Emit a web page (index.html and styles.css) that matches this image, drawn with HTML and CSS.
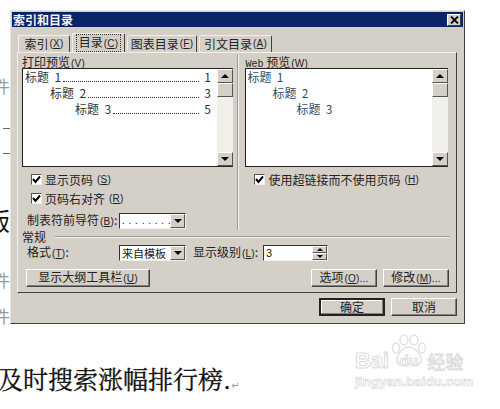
FILE: index.html
```html
<!DOCTYPE html>
<html lang="zh-CN">
<head>
  <meta charset="UTF-8">
  <title>索引和目录</title>
  <link rel="stylesheet" href="styles.css">
</head>
<body>
  <!-- word document peeking out behind the dialog -->
  <span class="doc-bit bit-1">件</span>
  <span class="doc-bit bit-2"></span>
  <span class="doc-bit bit-3"></span>
  <span class="doc-bit bit-4">版</span>
  <span class="doc-bit bit-5">件</span>
  <span class="doc-bit bit-6">件</span>

  <div class="dialog">
    <div class="titlebar">
      <span>索引和目录</span>
      <span class="close">
        <svg width="9" height="8" viewBox="0 0 9 8"><path d="M1 0.5 L8 7.5 M8 0.5 L1 7.5" stroke="#000" stroke-width="1.8" fill="none"/></svg>
      </span>
    </div>

    <div class="tabs">
      <div class="tab tab-index">索引<span class="mn">(<u>X</u>)</span></div>
      <div class="tab tab-toc active"><span class="focus">目录<span class="mn">(<u>C</u>)</span></span></div>
      <div class="tab tab-fig">图表目录<span class="mn">(<u>F</u>)</span></div>
      <div class="tab tab-cite">引文目录<span class="mn">(<u>A</u>)</span></div>
    </div>

    <div class="panel">
      <div class="columns">
        <div class="col col-print">
          <div class="label">打印预览<span class="mn">(<u>V</u>)</span></div>
          <div class="listbox">
            <div class="list-body">
              <div class="toc-row lvl-1"><span>标题&nbsp; 1</span><i class="dots"></i><span>1</span></div>
              <div class="toc-row lvl-2"><span>标题&nbsp; 2</span><i class="dots"></i><span>3</span></div>
              <div class="toc-row lvl-3"><span>标题&nbsp; 3</span><i class="dots"></i><span>5</span></div>
            </div>
            <div class="scrollbar">
              <div class="sb-btn"><b class="arrow up"></b></div>
              <div class="sb-thumb"></div>
              <div class="sb-track"></div>
              <div class="sb-btn"><b class="arrow down"></b></div>
            </div>
          </div>
          <div class="check first"><span class="box"><svg width="9" height="9" viewBox="0 0 9 9"><path d="M1 4 L3.5 7 L8 1.5" stroke="#000" stroke-width="2" fill="none"/></svg></span>显示页码<span class="mn">(<u>S</u>)</span></div>
          <div class="check"><span class="box"><svg width="9" height="9" viewBox="0 0 9 9"><path d="M1 4 L3.5 7 L8 1.5" stroke="#000" stroke-width="2" fill="none"/></svg></span>页码右对齐<span class="mn">(<u>R</u>)</span></div>
          <div class="field leader">
            <span class="field-label">制表符前导符<span class="mn">(<u>B</u>)</span>:</span>
            <div class="select"><span class="select-value dotted">. . . . . . . .</span><span class="select-btn"><b class="arrow down"></b></span></div>
          </div>
        </div>

        <div class="col col-web">
          <div class="label"><span class="web-word">Web</span> 预览<span class="mn">(<u>W</u>)</span></div>
          <div class="listbox">
            <div class="list-body web">
              <div class="toc-row lvl-1"><span>标题&nbsp; 1</span></div>
              <div class="toc-row web-2"><span>标题&nbsp; 2</span></div>
              <div class="toc-row web-3"><span>标题&nbsp; 3</span></div>
            </div>
            <div class="scrollbar">
              <div class="sb-btn"><b class="arrow up"></b></div>
              <div class="sb-thumb"></div>
              <div class="sb-track"></div>
              <div class="sb-btn"><b class="arrow down"></b></div>
            </div>
          </div>
          <div class="check first"><span class="box"><svg width="9" height="9" viewBox="0 0 9 9"><path d="M1 4 L3.5 7 L8 1.5" stroke="#000" stroke-width="2" fill="none"/></svg></span>使用超链接而不使用页码<span class="mn">(<u>H</u>)</span></div>
        </div>
      </div>

      <div class="group-head"><span>常规</span><i></i></div>
      <div class="format-row">
        <div class="field">
          <span class="field-label">格式<span class="mn">(<u>T</u>)</span>:</span>
          <div class="select"><span class="select-value">来自模板</span><span class="select-btn"><b class="arrow down"></b></span></div>
        </div>
        <span class="level-label">显示级别<span class="mn">(<u>L</u>)</span>:</span>
        <div class="spin">
          <span class="spin-value">3</span>
          <span class="spin-btns"><span><b class="arrow up"></b></span><span><b class="arrow down"></b></span></span>
        </div>
      </div>
      <div class="button-row">
        <button class="btn outline">显示大纲工具栏<span class="mn">(<u>U</u>)</span></button>
        <div class="button-right">
          <button class="btn">选项<span class="mn">(<u>O</u>)...</span></button>
          <button class="btn">修改<span class="mn">(<u>M</u>)...</span></button>
        </div>
      </div>
    </div>

    <div class="footer">
      <button class="btn default">确定</button>
      <button class="btn">取消</button>
    </div>
  </div>

  <p class="doc-line">及时搜索涨幅排行榜.<span class="para-mark">↵</span></p>

  <div class="watermark">
    <svg class="paw" width="38" height="34" viewBox="0 0 38 34">
      <g fill="#fff" stroke="#e2e2e2" stroke-width="1.5">
        <ellipse cx="6" cy="14" rx="3.5" ry="5"/>
        <ellipse cx="14" cy="6" rx="4" ry="5"/>
        <ellipse cx="24" cy="6" rx="4" ry="5"/>
        <ellipse cx="32" cy="14" rx="3.5" ry="5"/>
        <path d="M19 13 C25 13 32 21 31 27 C30 32 24 31 19 30 C14 31 8 32 7 27 C6 21 13 13 19 13 Z"/>
      </g>
    </svg>
    <div class="wm-main"><span>Bai</span><span class="wm-du">du</span><span class="wm-cn">经验</span></div>
    <div class="wm-url">jingyan.baidu.com</div>
  </div>
</body>
</html>
```

FILE: styles.css
```css
:root {
  --face: #d4d0c8;
  --shadow: #808080;
  --dark: #404040;
  --cjk: "Noto Sans CJK SC", "Liberation Sans", sans-serif;
}

* {
  box-sizing: border-box;
}

body {
  width: 500px;
  height: 409px;
  margin: 0;
  padding: 10px 0 0 10px;
  position: relative;
  overflow: hidden;
  background: #fff;
  font-family: var(--cjk);
  font-size: 12px;
  line-height: 14px;
  color: #222;
}

/* mnemonic like (S) next to a label */
.mn {
  margin-left: 1px;
  font-family: "Liberation Sans", sans-serif;
  font-size: 10px;
  letter-spacing: 0.2px;
}

.web-word {
  font-family: "Liberation Mono", monospace;
  font-size: 10px;
}

/* Document behind the dialog */
.doc-bit {
  position: absolute;
  font-family: "Liberation Serif", "Noto Sans CJK SC", serif;
}

.bit-1 { left: -7px; top: 78px; font-size: 17px; line-height: 20px; color: #9a9a9a; }
.bit-2 { left: 3px; top: 128px; width: 7px; height: 1px; background: #666; }
.bit-3 { left: 3px; top: 153px; width: 7px; height: 1px; background: #666; }
.bit-4 { left: -14px; top: 208px; font-size: 24px; line-height: 28px; color: #111; }
.bit-5 { left: -7px; top: 272px; font-size: 17px; line-height: 20px; color: #9a9a9a; }
.bit-6 { left: -7px; top: 308px; font-size: 17px; line-height: 20px; color: #9a9a9a; }

.doc-line {
  position: absolute;
  left: -2px;
  top: 362px;
  margin: 0;
  font-family: "Noto Serif CJK SC", "Noto Sans CJK SC", serif;
  font-size: 25px;
  line-height: 32px;
  color: #111;
  white-space: nowrap;
  -webkit-text-stroke: 0.3px #111;
}

.para-mark {
  font-size: 10px;
  color: #999;
  font-family: "DejaVu Sans", sans-serif;
  -webkit-text-stroke: 0;
}

/* Dialog frame */
.dialog {
  width: 455px;
  height: 314px;
  padding: 1px 1px 0 1px;
  background: var(--face);
  border: 1px solid;
  border-color: #e8e6e0 #404040 #404040 #e8e6e0;
}

.titlebar {
  height: 15px;
  padding: 0 2px 0 1px;
  display: flex;
  justify-content: space-between;
  align-items: center;
  background: #0a246a;
  color: #f4f4f4;
  font-weight: 700;
  font-size: 12px;
}

.close {
  width: 14px;
  height: 12px;
  display: flex;
  align-items: center;
  justify-content: center;
  background: var(--face);
  border: 1px solid;
  border-color: #fff #404040 #404040 #fff;
}

/* Tabs */
.tabs {
  height: 19px;
  margin-top: 6px;
  padding-left: 6px;
  display: flex;
  align-items: flex-end;
  gap: 2px;
}

.tab {
  height: 17px;
  display: flex;
  align-items: center;
  justify-content: center;
  border: 1px solid;
  border-color: #f2f0ea #404040 transparent #f2f0ea;
  border-bottom: 0;
  border-radius: 2px 2px 0 0;
}

.tab-index { width: 52px; }
.tab-toc { width: 53px; }
.tab-fig { width: 70px; }
.tab-cite { width: 73px; }

.tab.active {
  height: 19px;
  position: relative;
}

.focus {
  padding: 0 2px;
  outline: 1px dotted #333;
}

/* Panel */
.panel {
  width: 440px;
  height: 241px;
  margin-left: 5px;
  padding: 2px 7px 0 4px;
  border: 1px solid;
  border-color: #f2f0ea #404040 #404040 #f2f0ea;
}

.columns {
  height: 175px;
  display: flex;
}

.col-print {
  width: 216px;
}

.col-web {
  width: 212px;
  padding-left: 7px;
  border-left: 1px solid #999;
  box-shadow: inset 1px 0 0 #f2f0ea;
}

.label {
  height: 13px;
  line-height: 13px;
}

.listbox {
  width: 211px;
  height: 99px;
  display: flex;
  background: #fff;
  border: 1px solid #222;
  border-right: 0;
}

.col-web .listbox {
  width: 203px;
}

.list-body {
  flex: 1;
  padding: 0 6px 0 2px;
  font-family: "Noto Sans CJK SC", "Liberation Serif", serif;
  color: #333;
}

.list-body.web {
  padding-left: 1px;
  color: #2f5266;
}

.toc-row {
  height: 16px;
  line-height: 16px;
  display: flex;
  align-items: center;
  white-space: nowrap;
}

.lvl-2 { padding-left: 25px; }
.lvl-3 { padding-left: 50px; }
.web-2 { padding-left: 25px; }
.web-3 { padding-left: 49px; }

.dots {
  flex: 1;
  height: 10px;
  margin: 0 5px 0 2px;
  border-bottom: 1px dotted #333;
}

.scrollbar {
  width: 16px;
  display: flex;
  flex-direction: column;
  background: #f0efea;
}

.sb-btn,
.sb-thumb {
  background: var(--face);
  border: 1px solid;
  border-color: #fff #555 #555 #fff;
}

.sb-btn {
  height: 14px;
  display: flex;
  align-items: center;
  justify-content: center;
}

.sb-thumb {
  height: 14px;
}

.sb-track {
  flex: 1;
}

.arrow {
  display: block;
  width: 0;
  height: 0;
  border-left: 4px solid transparent;
  border-right: 4px solid transparent;
}

.arrow.up {
  border-bottom: 4px solid #000;
}

.arrow.down {
  border-top: 4px solid #000;
}

/* Checkboxes */
.check {
  height: 19px;
  margin-left: 9px;
  display: flex;
  align-items: center;
  gap: 3px;
}

.check.first {
  margin-top: 3px;
}

.box {
  width: 11px;
  height: 11px;
  display: flex;
  align-items: center;
  justify-content: center;
  background: #fff;
  border: 1px solid;
  border-color: #555 #eee #eee #555;
}

/* Fields */
.field {
  display: flex;
  align-items: center;
}

.field-label {
  width: 92px;
  margin-left: 5px;
  white-space: nowrap;
}

.leader {
  margin-top: 5px;
}

.select {
  width: 67px;
  height: 16px;
  display: flex;
  background: #fff;
  border: 1px solid;
  border-color: #333 #eee #eee #333;
}

.select-value {
  flex: 1;
  padding-left: 2px;
  font-size: 11px;
  line-height: 14px;
  white-space: nowrap;
  overflow: hidden;
}

.select-value.dotted {
  font-family: "Liberation Sans", sans-serif;
  font-size: 10px;
  letter-spacing: 0.5px;
}

.select-btn {
  width: 15px;
  display: flex;
  align-items: center;
  justify-content: center;
  background: var(--face);
  border: 1px solid;
  border-color: #fff #555 #555 #fff;
}

.group-head {
  height: 14px;
  display: flex;
  align-items: center;
  gap: 9px;
}

.group-head i {
  flex: 1;
  height: 2px;
  margin-right: -1px;
  border-top: 1px solid #999;
  border-bottom: 1px solid #f2f0ea;
}

.format-row {
  height: 16px;
  margin-top: 1px;
  display: flex;
  align-items: center;
}

.level-label {
  width: 70px;
  margin-left: 7px;
  white-space: nowrap;
}

.spin {
  width: 65px;
  height: 16px;
  display: flex;
  background: #fff;
  border: 1px solid;
  border-color: #333 #eee #eee #333;
}

.spin-value {
  flex: 1;
  padding-left: 2px;
  font-family: "Liberation Sans", sans-serif;
  font-size: 11px;
}

.spin-btns {
  width: 15px;
  display: flex;
  flex-direction: column;
}

.spin-btns span {
  flex: 1;
  display: flex;
  align-items: center;
  justify-content: center;
  background: var(--face);
  border: 1px solid;
  border-color: #fff #555 #555 #fff;
}

.spin-btns .arrow {
  border-left-width: 3px;
  border-right-width: 3px;
  border-top-width: 3px;
  border-bottom-width: 3px;
}

/* Buttons */
.button-row {
  margin-top: 8px;
  padding-left: 4px;
  display: flex;
  justify-content: space-between;
}

.button-right {
  display: flex;
  gap: 6px;
}

.btn {
  width: 66px;
  height: 18px;
  padding: 0;
  font-family: var(--cjk);
  font-size: 12px;
  line-height: 14px;
  color: #222;
  background: var(--face);
  border: 1px solid;
  border-color: #fff #404040 #404040 #fff;
  box-shadow: inset -1px -1px 0 var(--shadow);
}

.btn.outline {
  width: 124px;
}

.btn.default {
  border: 2px solid #222;
  box-shadow: inset -1px -1px 0 var(--shadow), inset 1px 1px 0 #fff;
}

.footer {
  height: 18px;
  margin-top: 5px;
  padding-right: 6px;
  display: flex;
  justify-content: flex-end;
  gap: 6px;
}

/* Baidu watermark */
.watermark {
  position: absolute;
  left: 355px;
  top: 334px;
  width: 114px;
  height: 56px;
}

.paw {
  position: absolute;
  left: 35px;
  top: 0;
}

.wm-main {
  position: absolute;
  left: 0;
  top: 15px;
  width: 114px;
  display: flex;
  align-items: center;
  font-family: "Liberation Sans", sans-serif;
  font-size: 22px;
  line-height: 24px;
  font-weight: 700;
  color: #fff;
  -webkit-text-stroke: 1px #dcdcdc;
}

.wm-du {
  width: 37px;
  margin-left: 1px;
  text-align: center;
  font-size: 15px;
}

.wm-cn {
  font-family: var(--cjk);
  font-size: 18px;
  line-height: 24px;
  font-weight: 400;
}

.wm-url {
  position: absolute;
  left: 0;
  top: 41px;
  font-family: "Liberation Sans", sans-serif;
  font-size: 13.5px;
  line-height: 14px;
  font-weight: 700;
  color: #fff;
  white-space: nowrap;
  -webkit-text-stroke: 0.7px #d8d8d8;
}
```
